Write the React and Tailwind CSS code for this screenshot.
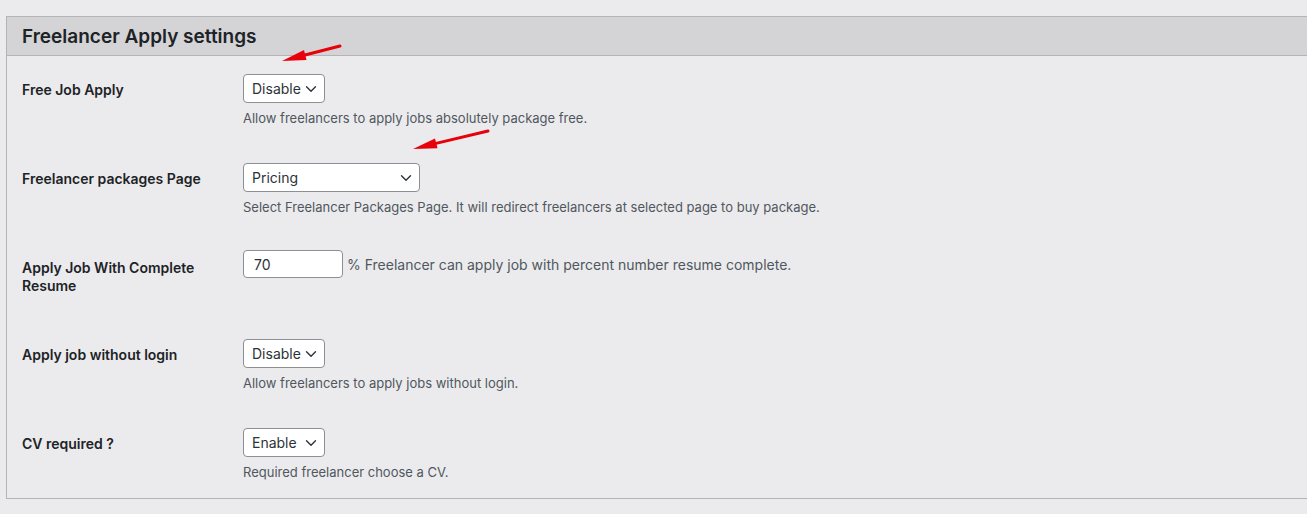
const font = { fontFamily: 'Inter, "Liberation Sans", sans-serif' }

function Chevron() {
  return (
    <svg width="12" height="8" viewBox="0 0 12 8" fill="none" className="shrink-0">
      <path d="M1.5 1.75 6 6.25l4.5-4.5" stroke="#2c3338" strokeWidth="1.4" strokeLinecap="round" strokeLinejoin="round" />
    </svg>
  )
}

function Select({ value, width }) {
  return (
    <div
      className={`flex h-[29px] ${width} items-center justify-between rounded-[4px] border border-[#8c8f94] bg-white pl-[8px] pr-[7px] text-[14px] text-[#2c3338]`}
    >
      <span>{value}</span>
      <Chevron />
    </div>
  )
}

function Row({ label, height, children, labelPad = 'pt-[7px]' }) {
  return (
    <div className={`flex ${height} items-start pt-[13px]`}>
      <div className={`w-[221px] shrink-0 ${labelPad} text-[14px] font-semibold leading-[18px] text-[#1d2327]`}>
        {label}
      </div>
      <div className="flex flex-col">{children}</div>
    </div>
  )
}

function Desc({ children }) {
  return <p className="mt-[6px] text-[13px] leading-[18px] text-[#50575e]">{children}</p>
}

export default function App() {
  return (
    <div className="relative min-h-[514px] overflow-hidden bg-[#ebebed] pt-[16px]" style={font}>
      <section className="ml-[6px] border-y border-l border-[#b4b4b6]">
        <div className="flex h-[39px] items-center border-b border-[#b4b4b6] bg-[#d4d4d6] pl-[15px] pt-[2px]">
          <h2 className="text-[19px] font-semibold text-[#1d2327]">Freelancer Apply settings</h2>
        </div>
        <div className="pl-[15px] pt-[5px]">
          <Row label="Free Job Apply" height="h-[89px]">
            <Select value="Disable" width="w-[82px]" />
            <Desc>Allow freelancers to apply jobs absolutely package free.</Desc>
          </Row>
          <Row label="Freelancer packages Page" height="h-[87px]">
            <Select value="Pricing" width="w-[177px]" />
            <Desc>Select Freelancer Packages Page. It will redirect freelancers at selected page to buy package.</Desc>
          </Row>
          <Row label={<>Apply Job With Complete<br />Resume</>} height="h-[89px]" labelPad="pt-[9px]">
            <div className="flex items-center">
              <div className="flex h-[28px] w-[100px] items-center rounded-[4px] border border-[#8c8f94] bg-white pl-[10px] text-[14px] text-[#2c3338]">
                70
              </div>
              <span className="ml-[4px] text-[14px] text-[#50575e]">
                % Freelancer can apply job with percent number resume complete.
              </span>
            </div>
          </Row>
          <Row label="Apply job without login" height="h-[89px]">
            <Select value="Disable" width="w-[82px]" />
            <Desc>Allow freelancers to apply jobs without login.</Desc>
          </Row>
          <Row label="CV required ?" height="h-[83px]">
            <Select value="Enable" width="w-[82px]" />
            <Desc>Required freelancer choose a CV.</Desc>
          </Row>
        </div>
      </section>

      <svg className="pointer-events-none absolute left-0 top-0" width="1307" height="514">
        <line x1="340" y1="46" x2="305" y2="55" stroke="#e8000b" strokeWidth="3" strokeLinecap="round" />
        <polygon points="282,61 304,50 306.5,60" fill="#e8000b" />
        <line x1="488" y1="131" x2="436" y2="143.4" stroke="#e8000b" strokeWidth="3" strokeLinecap="round" />
        <polygon points="413,149 435,138.5 437.5,148.3" fill="#e8000b" />
      </svg>
    </div>
  )
}
